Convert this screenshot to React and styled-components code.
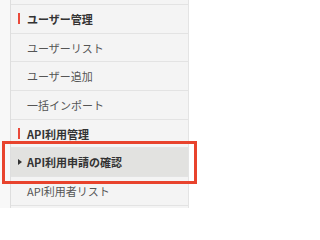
import React from "react";
import styled, { createGlobalStyle } from "styled-components";

const GlobalStyle = createGlobalStyle`
  html, body {
    margin: 0;
    padding: 0;
    background: #ffffff;
  }
  body {
    font-family: "Noto Sans CJK JP", "Noto Sans", sans-serif;
  }
`;

const menu = [
  {
    title: "ユーザー管理",
    items: [{ label: "ユーザーリスト" }, { label: "ユーザー追加" }, { label: "一括インポート" }],
  },
  {
    title: "API利用管理",
    items: [{ label: "API利用申請の確認", active: true }, { label: "API利用者リスト" }],
  },
];

const App = () => {
  return (
    <Page>
      <GlobalStyle />
      <Gutter />
      <Sidebar>
        <Menu>
          {menu.map((group) => (
            <React.Fragment key={group.title}>
              <GroupTitle>{group.title}</GroupTitle>
              {group.items.map((item) => (
                <Item key={item.label} $active={item.active}>
                  {item.active && <Arrow />}
                  {item.label}
                  {item.active && <Highlight />}
                </Item>
              ))}
            </React.Fragment>
          ))}
        </Menu>
      </Sidebar>
    </Page>
  );
};

const Page = styled.div`
  display: flex;
  width: 200px;
  height: 208px;
  overflow: hidden;
  background: #ffffff;
`;

const Gutter = styled.div`
  width: 10px;
  flex: none;
  background: #f8f8f8;
  border-right: 1px solid #dedede;
`;

const Sidebar = styled.nav`
  width: 177px;
  flex: none;
  background: #f4f4f4;
  border-right: 1px solid #e4e4e4;
`;

const Menu = styled.div`
  display: flex;
  flex-direction: column;
  padding-top: 4px;
`;

const Row = styled.div`
  position: relative;
  display: flex;
  align-items: center;
  height: 27.7px;
  border-top: 1px solid #e3e3e3;
  padding-left: 16px;
  font-size: 11px;
  white-space: nowrap;
`;

const GroupTitle = styled(Row)`
  font-weight: bold;
  color: #333333;

  &::before {
    content: "";
    position: absolute;
    left: 7px;
    top: 8px;
    width: 2px;
    height: 11px;
    background: #ea4a3a;
  }
`;

const Item = styled(Row)`
  color: ${(p) => (p.$active ? "#333333" : "#555555")};
  font-weight: ${(p) => (p.$active ? "bold" : "normal")};
  background: ${(p) => (p.$active ? "#e2e2e0" : "transparent")};

  &:last-child {
    border-bottom: 1px solid #e3e3e3;
  }
`;

const Arrow = styled.span`
  position: absolute;
  left: 7px;
  top: 11px;
  width: 0;
  height: 0;
  border-top: 3px solid transparent;
  border-bottom: 3px solid transparent;
  border-left: 4px solid #333333;
`;

const Highlight = styled.span`
  position: absolute;
  left: -9px;
  right: -9px;
  top: -7px;
  bottom: -8px;
  border: 3px solid #e8432d;
  pointer-events: none;
`;

export default App;
